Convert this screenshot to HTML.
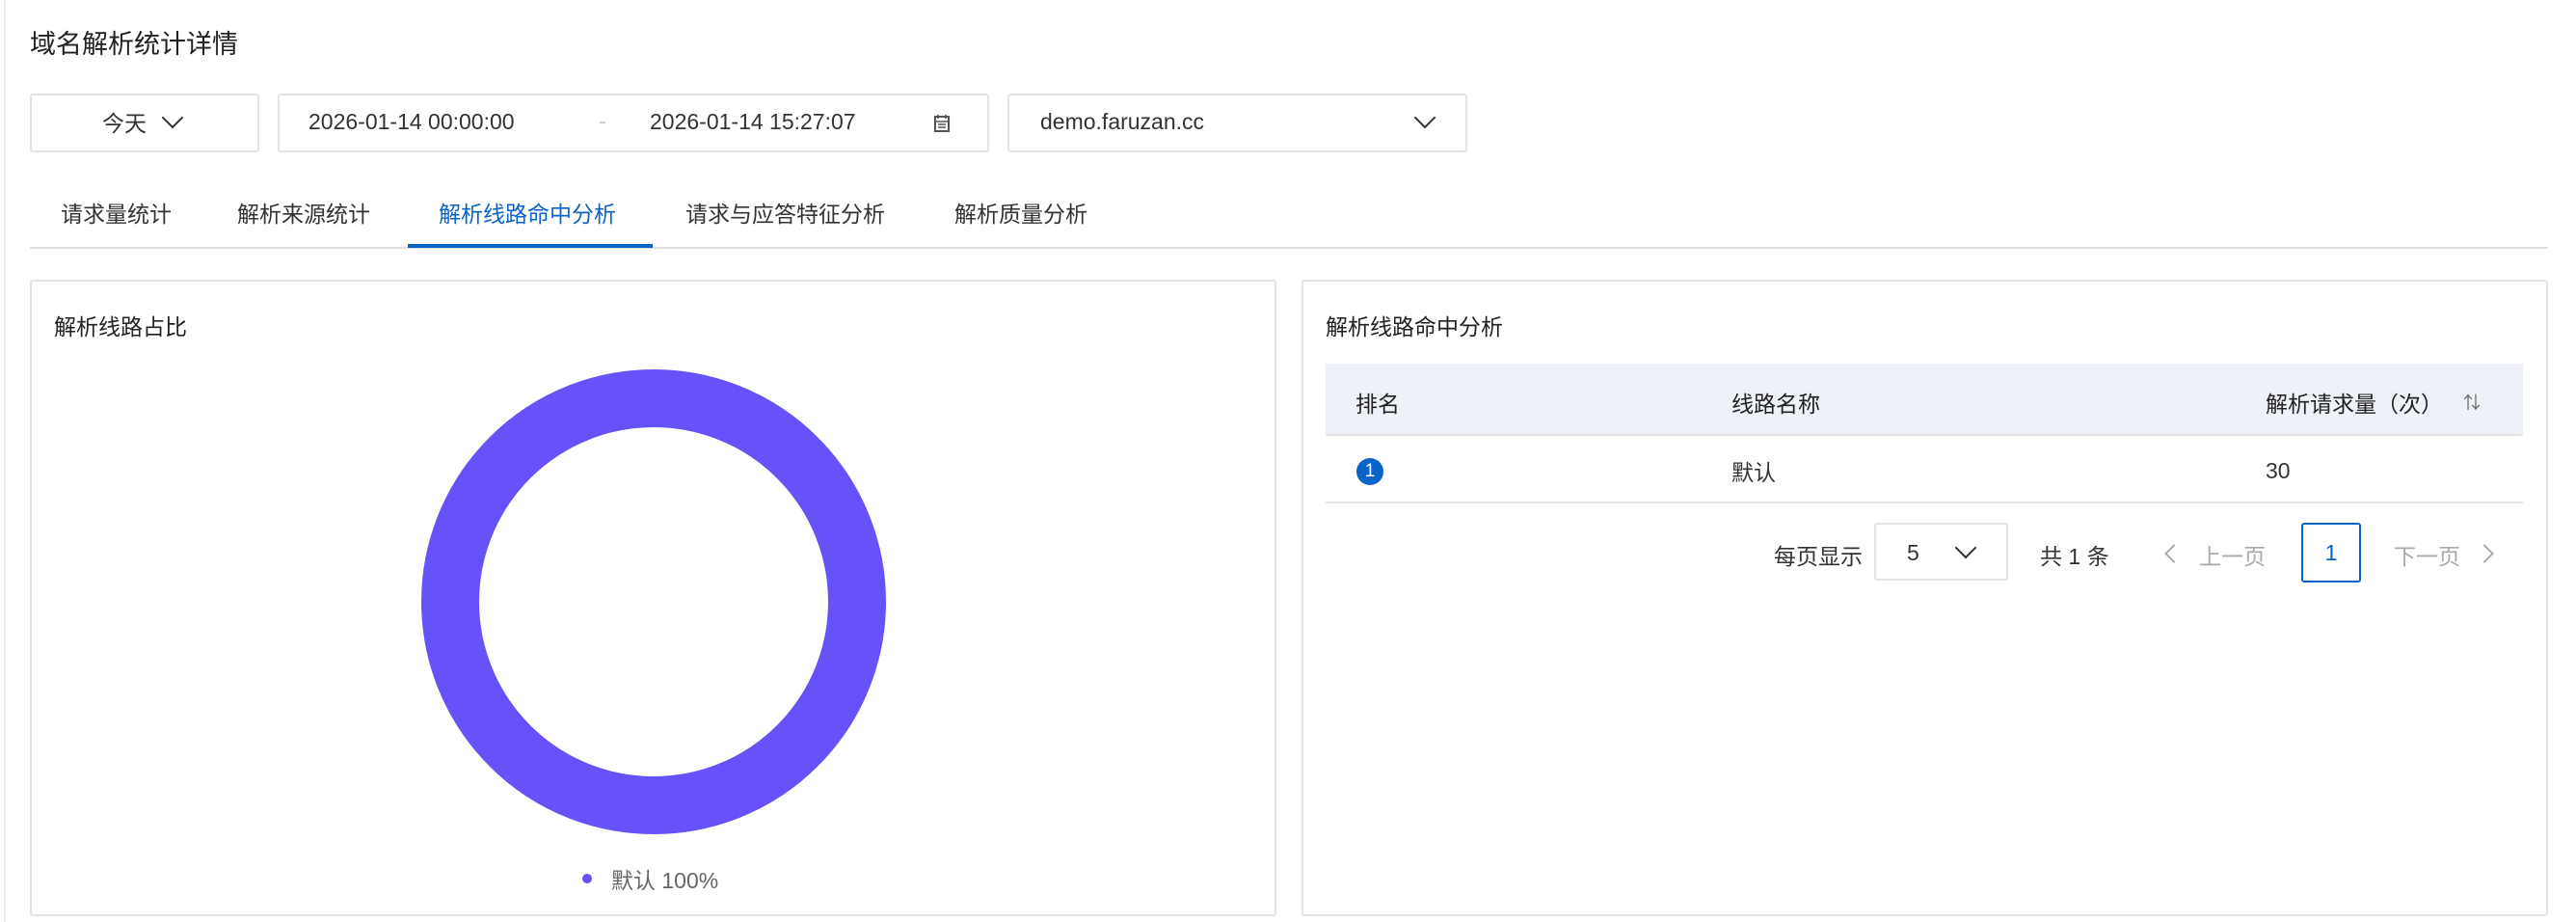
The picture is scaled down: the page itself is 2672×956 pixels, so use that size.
<!DOCTYPE html>
<html><head><meta charset="utf-8"><style>
*{box-sizing:border-box;margin:0;padding:0}
body{width:2672px;height:956px;background:#fff;font-family:"Liberation Sans","Noto Sans CJK SC",sans-serif;color:#333;position:relative;overflow:hidden;font-size:23px}
.a{position:absolute}
.box{position:absolute;border:2px solid #e3e3e3;border-radius:3px}
.chev{position:absolute;width:16px;height:16px;border-right:2.5px solid #333;border-bottom:2.5px solid #333;transform:rotate(45deg)}
</style></head><body>
<div class="a" style="left:4px;top:0;width:2px;height:956px;background:#eee"></div>
<div class="a" style="left:31px;top:24px;font-size:27px;color:#222">域名解析统计详情</div>

<div class="box" style="left:31px;top:97px;width:238px;height:61px"></div>
<div class="a" style="left:106px;top:109px">今天</div>
<div class="chev" style="left:171px;top:114px"></div>

<div class="box" style="left:288px;top:97px;width:738px;height:61px"></div>
<div class="a" style="left:320px;top:113px">2026-01-14 00:00:00</div>
<div class="a" style="left:622px;top:126px;width:6px;height:2px;background:#ccc"></div>
<div class="a" style="left:674px;top:113px">2026-01-14 15:27:07</div>
<svg class="a" style="left:968px;top:118px" width="18" height="20" viewBox="0 0 18 20"><rect x="2" y="3" width="14" height="15" fill="none" stroke="#555" stroke-width="2"/><path d="M2 8h14M5 11h8M5 14h8M5 1v4M13 1v4" stroke="#555" stroke-width="1.6"/></svg>

<div class="box" style="left:1045px;top:97px;width:477px;height:61px"></div>
<div class="a" style="left:1079px;top:113px">demo.faruzan.cc</div>
<div class="chev" style="left:1470px;top:114px"></div>

<div class="a" style="left:63px;top:203px">请求量统计</div>
<div class="a" style="left:246px;top:203px">解析来源统计</div>
<div class="a" style="left:455px;top:203px;color:#0a64c8">解析线路命中分析</div>
<div class="a" style="left:711px;top:203px">请求与应答特征分析</div>
<div class="a" style="left:990px;top:203px">解析质量分析</div>
<div class="a" style="left:31px;top:256px;width:2612px;height:2px;background:#e0e0e0"></div>
<div class="a" style="left:423px;top:253px;width:254px;height:4px;background:#0a64c8"></div>

<div class="box" style="left:31px;top:290px;width:1293px;height:660px"></div>
<div class="a" style="left:56px;top:320px;color:#222">解析线路占比</div>
<div class="a" style="left:437px;top:383px;width:482px;height:482px;border-radius:50%;border:60px solid #6652f8"></div>
<div class="a" style="left:604px;top:906px;width:10px;height:10px;border-radius:50%;background:#6652f8"></div>
<div class="a" style="left:634px;top:894px;color:#666">默认 100%</div>

<div class="box" style="left:1350px;top:290px;width:1293px;height:660px"></div>
<div class="a" style="left:1375px;top:320px;color:#222">解析线路命中分析</div>
<div class="a" style="left:1375px;top:377px;width:1242px;height:75px;background:#eef1f8;border-bottom:2px solid #e2e2e2"></div>
<div class="a" style="left:1406px;top:400px;color:#222">排名</div>
<div class="a" style="left:1796px;top:400px;color:#222">线路名称</div>
<div class="a" style="left:2350px;top:400px;color:#222">解析请求量（次）</div>
<div class="a" style="left:2555px;top:404px;font-size:18px;color:#666">⇅</div>
<div class="a" style="left:1375px;top:520px;width:1242px;height:2px;background:#e6e6e6"></div>
<div class="a" style="left:1407px;top:475px;width:28px;height:28px;border-radius:50%;background:#0a64c8;color:#fff;font-size:19px;text-align:center;line-height:28px">1</div>
<div class="a" style="left:1796px;top:471px">默认</div>
<div class="a" style="left:2350px;top:475px">30</div>

<div class="a" style="left:1840px;top:558px">每页显示</div>
<div class="box" style="left:1944px;top:542px;width:139px;height:60px"></div>
<div class="a" style="left:1978px;top:560px">5</div>
<div class="chev" style="left:2031px;top:560px"></div>
<div class="a" style="left:2116px;top:558px">共 1 条</div>
<div class="a" style="left:2248px;top:567px;width:14px;height:14px;border-left:2px solid #aaa;border-bottom:2px solid #aaa;transform:rotate(45deg)"></div>
<div class="a" style="left:2281px;top:558px;color:#aaa">上一页</div>
<div class="a" style="left:2387px;top:542px;width:62px;height:62px;border:2px solid #0a64c8;border-radius:3px;color:#0a64c8;text-align:center;line-height:58px">1</div>
<div class="a" style="left:2483px;top:558px;color:#aaa">下一页</div>
<div class="a" style="left:2570px;top:567px;width:14px;height:14px;border-right:2px solid #aaa;border-top:2px solid #aaa;transform:rotate(45deg)"></div>
</body></html>
